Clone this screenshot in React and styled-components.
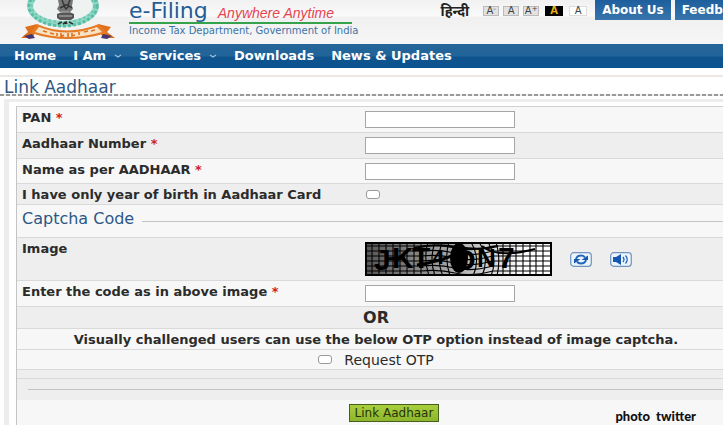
import { styled, createGlobalStyle } from 'styled-components';

export default function App() {
  return (
    <Page>
      <GlobalStyle />
      <Header>
        <Brand>
          <Emblem />
          <BrandText>
            <BrandLine>
              <BrandName>e-Filing</BrandName>
              <Tagline>Anywhere Anytime</Tagline>
            </BrandLine>
            <Department>Income Tax Department, Government of India</Department>
          </BrandText>
        </Brand>
        <Tools>
          <Language href="#hindi" lang="hi">
            हिन्दी
          </Language>
          <SizeButtons>
            <SizeButton type="button">
              A<sup>-</sup>
            </SizeButton>
            <SizeButton type="button">A</SizeButton>
            <SizeButton type="button">
              A<sup>+</sup>
            </SizeButton>
            <SizeButton type="button" $theme="dark">
              A
            </SizeButton>
            <SizeButton type="button" $theme="light">
              A
            </SizeButton>
          </SizeButtons>
          <TopLinks>
            <TopLink href="#about">About Us</TopLink>
            <TopLink href="#feedback">Feedback</TopLink>
          </TopLinks>
        </Tools>
      </Header>

      <Nav>
        <NavLink href="#home">Home</NavLink>
        <NavLink href="#iam">
          I Am <Caret />
        </NavLink>
        <NavLink href="#services">
          Services <Caret />
        </NavLink>
        <NavLink href="#downloads">Downloads</NavLink>
        <NavLink href="#news">News &amp; Updates</NavLink>
      </Nav>

      <Main>
        <Title>Link Aadhaar</Title>
        <Frame>
          <Form onSubmit={(e) => e.preventDefault()}>
            <Row $height={26}>
              <Label htmlFor="pan">
                PAN <Star>*</Star>
              </Label>
              <TextInput id="pan" />
            </Row>
            <Row $height={26} $shade>
              <Label htmlFor="aadhaar">
                Aadhaar Number <Star>*</Star>
              </Label>
              <TextInput id="aadhaar" />
            </Row>
            <Row $height={25}>
              <Label htmlFor="name">
                Name as per AADHAAR <Star>*</Star>
              </Label>
              <TextInput id="name" />
            </Row>
            <Row $height={21} $shade>
              <Label htmlFor="year">I have only year of birth in Aadhaar Card</Label>
              <Checkbox id="year" />
            </Row>
            <SectionRow>
              <SectionTitle>Captcha Code</SectionTitle>
              <SectionLine />
            </SectionRow>
            <Row $height={43} $shade>
              <Label as="span">Image</Label>
              <CaptchaGroup>
                <Captcha />
                <IconButton type="button" aria-label="Refresh captcha">
                  <RefreshIcon />
                </IconButton>
                <IconButton type="button" aria-label="Play captcha audio">
                  <SpeakerIcon />
                </IconButton>
              </CaptchaGroup>
            </Row>
            <Row $height={26}>
              <Label htmlFor="code">
                Enter the code as in above image <Star>*</Star>
              </Label>
              <TextInput id="code" />
            </Row>
            <CenterRow $height={22} $shade>
              <Or>OR</Or>
            </CenterRow>
            <CenterRow $height={21}>
              <Note>Visually challenged users can use the below OTP option instead of image captcha.</Note>
            </CenterRow>
            <CenterRow $height={20}>
              <OtpLabel>
                <Checkbox />
                Request OTP
              </OtpLabel>
            </CenterRow>
            <CenterRow $height={9} $shade />
            <DividerRow $shade>
              <Divider />
            </DividerRow>
            <SubmitRow>
              <Submit type="submit">Link Aadhaar</Submit>
            </SubmitRow>
          </Form>
        </Frame>
      </Main>
      <Credit>photo&nbsp; twitter</Credit>
    </Page>
  );
}

function Emblem() {
  return (
    <svg width="96" height="42" viewBox="20 0 96 42" aria-hidden="true">
      <ellipse cx="63" cy="6" rx="33" ry="18" fill="#eef3f1" stroke="#8ed8c5" strokeWidth="6" />
      <ellipse cx="63" cy="6" rx="34" ry="20" fill="none" stroke="#58bda5" strokeWidth="3" strokeDasharray="3 2" />
      <ellipse cx="63" cy="6" rx="31" ry="16" fill="none" stroke="#69c6af" strokeWidth="2" strokeDasharray="2 3" />
      <path d="M58 0h15l-1 6 1 3-3 3H60l-3-3 2-4z" fill="#777" />
      <path d="M62 0l2 5h4l2-5M60 8l4-2 2 3 3-3 3 2" fill="none" stroke="#333" strokeWidth="1.4" />
      <path d="M57 14q9-5 17 0v4l-3 2H60l-3-2z" fill="#555" />
      <path d="M59 16h13M61 12h8" stroke="#bbb" strokeWidth="1" />
      <path d="M58 24l4-2M63 24l3-2 1 2M69 22l4 2" stroke="#333" strokeWidth="1.6" />
      <path d="M21 38l7-6-3-5 12-3-2 8-2 6z" fill="#e0701c" />
      <path d="M115 38l-8-6 4-5-13-3 2 8 3 6z" fill="#e0701c" />
      <path d="M24 36l8-2 3 4-6 1zM112 36l-9-2-2 4 6 1z" fill="#49356f" />
      <path d="M37 24q29 13 62 0l8 9q-41 12-76 0z" fill="#e57b24" />
      <path d="M39 27q28 11 58 0l5 5q-35 10-67 0z" fill="#f8e2c6" />
      <path
        d="M43 31l4 1M50 33l4 1M57 33v3M61 33v4l3-2M68 33v4M72 33v3l3-1M79 32v3M84 32l4-1M91 31l4-1"
        stroke="#e0701c"
        strokeWidth="1.6"
        fill="none"
      />
    </svg>
  );
}

function Caret() {
  return (
    <svg width="8" height="4" viewBox="0 0 8 4" aria-hidden="true">
      <path d="M1 1l3 2 3-2" fill="none" stroke="#9cc0dd" strokeWidth="1.2" />
    </svg>
  );
}

const columns = [7, 14, 21, 28, 35, 42, 49, 56, 138, 145, 151, 158, 165, 171, 178];
const rows = [4, 9, 14, 19, 24, 29];

function Captcha() {
  return (
    <svg width="187" height="34" viewBox="0 0 187 34" role="img" aria-label="Captcha">
      <defs>
        <linearGradient id="shade">
          <stop offset="0" stopColor="#555" />
          <stop offset="0.3" stopColor="#8a8a8a" />
          <stop offset="0.6" stopColor="#c4c4c4" />
          <stop offset="0.85" stopColor="#fff" />
        </linearGradient>
      </defs>
      <rect width="187" height="34" fill="url(#shade)" />
      <g stroke="#000" strokeWidth="1.1" fill="none">
        {columns.map((x) => (
          <path key={x} d={`M${x} 0V34`} />
        ))}
        {rows.map((y) => (
          <path key={y} d={`M0 ${y}H56Q74 ${y - 2} 90 ${y + 2}T128 ${y}H187`} />
        ))}
        <path d="M63 0Q58 16 64 34M70 0Q64 17 70 34M77 0Q71 18 78 34M84 0Q79 16 85 34M106 0Q116 17 108 34M114 0Q125 16 117 34M123 0Q133 17 126 34M131 0Q136 17 132 34" />
        <rect x="1" y="1" width="185" height="32" strokeWidth="2" />
      </g>
      <g fontFamily="Liberation Sans, sans-serif" fontWeight="700" fontSize="30" fill="#000">
        <text x="9" y="28">J</text>
        <text x="27" y="26">K</text>
        <text x="47" y="26">T</text>
        <text x="68" y="22" fontSize="20">4</text>
        <text x="89" y="28" fontSize="30">D</text>
        <text x="112" y="25" fontSize="26">N</text>
        <text x="133" y="26">7</text>
      </g>
      <ellipse cx="94" cy="16" rx="9" ry="15" />
      <path d="M20 17L40 16M52 23Q74 20 91 12" fill="none" stroke="#000" strokeWidth="3" />
      <path d="M49 6Q70 1 93 5T133 4M117 4Q132 17 170 7" fill="none" stroke="#000" strokeWidth="2" />
    </svg>
  );
}

function RefreshIcon() {
  return (
    <svg width="22" height="15" viewBox="0 0 22 15" aria-hidden="true">
      <rect x="0.7" y="0.7" width="20.6" height="13.6" rx="3" fill="#edf5fc" stroke="#7094bd" strokeWidth="1.2" />
      <path d="M6 7Q7 3.500 11 3.500q3 0 4 2M16 8q-1 3.500-5 3.500-3 0-4-2" fill="none" stroke="#2466ba" strokeWidth="2" />
      <path d="M11.500 8h6.500V3.500zM10.500 7H4v4.500z" fill="#1557b1" />
    </svg>
  );
}

function SpeakerIcon() {
  return (
    <svg width="22" height="15" viewBox="0 0 22 15" aria-hidden="true">
      <rect x="0.7" y="0.7" width="20.6" height="13.6" rx="3" fill="#edf5fc" stroke="#7094bd" strokeWidth="1.2" />
      <path d="M3 5h3l5-3v11l-5-3H3z" fill="#1557b1" />
      <path d="M13 5q2 2.500 0 5M15.500 3.500q3.500 4 0 8" fill="none" stroke="#2466ba" strokeWidth="1.3" />
    </svg>
  );
}

const GlobalStyle = createGlobalStyle`
  * {
    box-sizing: border-box;
  }
  body {
    margin: 0;
    background: #fff;
    color: #2b2b2b;
    font-family: 'DejaVu Sans', sans-serif;
    font-size: 13px;
  }
  a {
    text-decoration: none;
  }
`;

const Page = styled.div`
  position: relative;
  overflow: hidden;
`;

const Header = styled.header`
  display: flex;
  justify-content: space-between;
  height: 44px;
  padding-left: 20px;
  background: linear-gradient(#f1f1f1, #fafafa 36%, #f0f0f0 40%, #f6f6f6);
`;

const Brand = styled.div`
  display: flex;
  flex-shrink: 0;
  gap: 13px;
`;

const BrandText = styled.div`
  white-space: nowrap;
`;

const BrandLine = styled.div`
  display: flex;
  align-items: baseline;
  gap: 10px;
  width: 223px;
  height: 24px;
  border-bottom: 2px solid #35a34c;
  line-height: 22px;
`;

const BrandName = styled.span`
  color: #235c97;
  font-size: 22px;
`;

const Tagline = styled.span`
  color: #e54450;
  font-family: 'Liberation Sans', sans-serif;
  font-size: 14px;
  font-style: italic;
`;

const Department = styled.div`
  color: #3b74a8;
  font-size: 10px;
  line-height: 13px;
`;

const Tools = styled.div`
  display: flex;
  flex-shrink: 0;
  align-items: flex-start;
  margin-right: -30px;
`;

const Language = styled.a`
  margin-right: 14px;
  color: #222;
  font-family: 'Noto Sans', 'Noto Sans Devanagari', sans-serif;
  font-size: 14px;
  font-weight: 700;
  line-height: 22px;
`;

const SizeButtons = styled.div`
  display: flex;
  gap: 4px;
  padding-top: 6px;
`;

const sizeColors = {
  plain: ['#444', '#e2e2e2', '#bbb'],
  dark: ['#e8b010', '#000', '#000'],
  light: ['#444', '#fff', '#ddd'],
};

const SizeButton = styled.button`
  width: ${(p) => (p.$theme ? 18 : 16)}px;
  height: 10px;
  margin-left: ${(p) => (p.$theme ? 2 : 0)}px;
  padding: 0;
  border: 1px solid ${(p) => sizeColors[p.$theme || 'plain'][2]};
  background: ${(p) => sizeColors[p.$theme || 'plain'][1]};
  color: ${(p) => sizeColors[p.$theme || 'plain'][0]};
  font: ${(p) => (p.$theme === 'dark' ? 700 : 400)} 10px/8px 'DejaVu Sans', sans-serif;
  & sup {
    font-size: 7px;
    line-height: 0;
    vertical-align: 3px;
  }
`;

const TopLinks = styled.nav`
  display: flex;
  gap: 4px;
  margin-left: 8px;
`;

const TopLink = styled.a`
  height: 20px;
  padding: 0 7px;
  background: linear-gradient(#1d5f9d, #3875ac);
  color: #fff;
  font-size: 12px;
  font-weight: 700;
  line-height: 20px;
`;

const Nav = styled.nav`
  display: flex;
  gap: 17px;
  height: 24px;
  padding-left: 14px;
  background: linear-gradient(#266599, #216499 50%, #0f548f 54%, #0b528e);
`;

const NavLink = styled.a`
  display: flex;
  align-items: center;
  gap: 8px;
  color: #fff;
  font-weight: 700;
  line-height: 24px;
  white-space: nowrap;
`;

const Main = styled.main`
  margin-top: 7px;
  border-top: 2px solid #ebe8e6;
`;

const Title = styled.h1`
  height: 19px;
  margin: 0 0 3px;
  padding-left: 4px;
  background: repeating-linear-gradient(90deg, #999 0 4px, #eee 4px 6px) bottom / 100% 2px no-repeat;
  color: #2c5684;
  font-size: 17px;
  font-weight: 400;
  line-height: 20px;
`;

/* runs past the right edge, like the table inside it */
const Frame = styled.div`
  margin: 0 -12px 0 4px;
  padding: 4px 0 0 7px;
  border-top: 3px solid #ededed;
  border-left: 5px solid #ededed;
`;

const Form = styled.form`
  border-top: 1px solid #d2d2d2;
  border-left: 1px solid #c4c4c4;
`;

const BaseRow = styled.div`
  border-bottom: 1px solid #d9d9d9;
  background: ${(p) => (p.$shade ? '#eee' : '#f7f7f7')};
`;

const Row = styled(BaseRow)`
  display: grid;
  grid-template-columns: 343px 1fr;
  align-items: start;
  height: ${(p) => p.$height}px;
  padding: 4px 0 0 5px;
`;

const Label = styled.label`
  color: #2b2b2b;
  font-size: 13px;
  font-weight: 700;
  line-height: 14px;
`;

const Star = styled.span`
  color: #c22;
`;

const TextInput = styled.input`
  width: 150px;
  height: 17px;
  padding: 0 3px;
  border: 1px solid #a5a5a5;
  border-radius: 0;
  background: #fff;
`;

const Checkbox = styled.input.attrs({ type: 'checkbox' })`
  appearance: none;
  width: 14px;
  height: 9px;
  margin: 2px 0 0 1px;
  border: 1px solid #999;
  border-radius: 3px;
  background: #fff;
`;

const SectionRow = styled(BaseRow)`
  display: flex;
  align-items: center;
  gap: 8px;
  height: 33px;
  padding-left: 5px;
`;

const SectionTitle = styled.h2`
  margin: 0;
  padding-bottom: 4px;
  color: #2a5886;
  font-size: 16px;
  font-weight: 400;
  line-height: 18px;
`;

const SectionLine = styled.div`
  flex: 1;
  height: 1px;
  background: #c4c4c4;
`;

const CaptchaGroup = styled.div`
  display: flex;
  align-items: center;
  gap: 18px;
`;

const IconButton = styled.button`
  display: flex;
  padding: 0;
  border: 0;
  background: none;
`;

const CenterRow = styled(BaseRow)`
  display: flex;
  align-items: center;
  justify-content: center;
  height: ${(p) => p.$height}px;
`;

const Or = styled.strong`
  font-size: 16px;
  line-height: 18px;
`;

const Note = styled.strong`
  white-space: nowrap;
`;

const OtpLabel = styled.label`
  display: flex;
  align-items: center;
  gap: 12px;
  font-size: 14px;
  line-height: 18px;
  & input {
    margin: 0;
  }
`;

const DividerRow = styled(BaseRow)`
  height: 21px;
  padding: 10px 0 0 11px;
  border-bottom: 0;
`;

const Divider = styled.hr`
  margin: 0;
  border: 0;
  border-top: 1px solid #c4c4c4;
`;

const SubmitRow = styled(BaseRow)`
  display: flex;
  justify-content: center;
  height: 26px;
  padding: 4px 0 0 36px;
`;

const Submit = styled.button`
  height: 18px;
  padding: 0 5px;
  border: 1px solid #44601a;
  border-radius: 0;
  background: linear-gradient(#a9cf3e, #8db52c);
  color: #26330c;
  font: 12px/16px 'DejaVu Sans', sans-serif;
`;

/* credit stamped over the lower right corner */
const Credit = styled.div`
  position: absolute;
  right: 27px;
  bottom: 2px;
  color: #111;
  font: 900 13px/16px Lato, sans-serif;
`;
